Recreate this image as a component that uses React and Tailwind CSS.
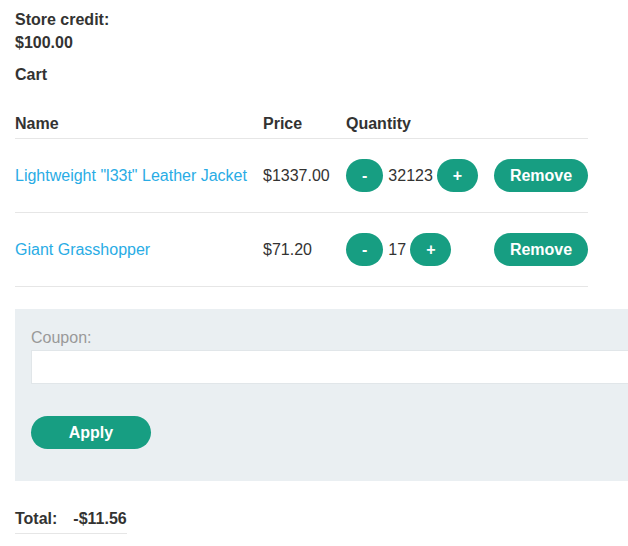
export default function App() {
  const items = [
    { name: 'Lightweight "l33t" Leather Jacket', price: '$1337.00', qty: 32123 },
    { name: 'Giant Grasshopper', price: '$71.20', qty: 17 },
  ];

  const btn = 'inline-flex items-center justify-center h-[33px] rounded-full bg-[#179e82] text-white font-bold';

  return (
    <div className="w-[628px] overflow-hidden bg-white text-[16px] leading-[23px] text-[#333332] font-['Liberation_Sans',Arial,sans-serif]">
      <div className="pl-[15px] pt-[8px]">
        <p className="font-bold">
          Store credit:
          <br />
          $100.00
        </p>
        <p className="font-bold mt-[9px]">Cart</p>

        <div className="w-[573px] mt-[26px]">
          <div className="flex font-bold pb-[3px] border-b border-[#e6e6e6]">
            <div className="w-[248px]">Name</div>
            <div className="w-[83px]">Price</div>
            <div>Quantity</div>
          </div>
          {items.map((item) => (
            <div key={item.name} className="flex items-center h-[74px] border-b border-[#e6e6e6]">
              <a href="#" className="w-[248px] text-[#29ace5]">{item.name}</a>
              <div className="w-[83px]">{item.price}</div>
              <div className="w-[148px] flex items-center whitespace-nowrap">
                <button className={`${btn} px-4`}>-</button>
                <span className="ml-[5px] mr-[4px]">{item.qty}</span>
                <button className={`${btn} px-4`}>+</button>
              </div>
              <button className={`${btn} w-[94px]`}>Remove</button>
            </div>
          ))}
        </div>

        <div className="w-[700px] mt-[22px] bg-[#eaeff2] pl-[16px] pt-[17px] pb-[32px]">
          <label className="block text-[#999999]">Coupon:</label>
          <input type="text" className="block w-full h-[34px] mt-[1px] bg-white border border-[#e1e6e9] outline-none" />
          <button className={`${btn} w-[120px] mt-[32px]`}>Apply</button>
        </div>

        <div className="inline-flex font-bold mt-[26px] pb-[3px] border-b border-[#e6e6e6]">
          <span>Total:</span>
          <span className="ml-[16px]">-$11.56</span>
        </div>
      </div>
    </div>
  );
}
